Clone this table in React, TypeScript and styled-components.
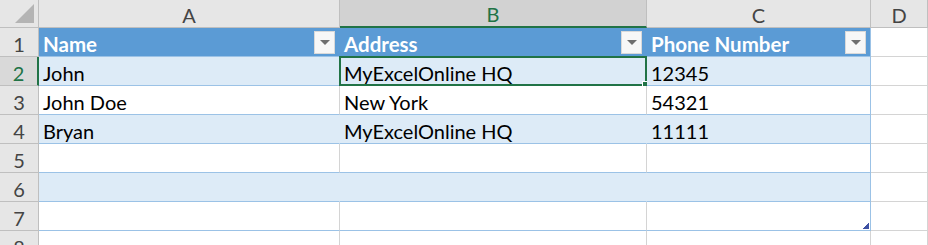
import React from 'react';
import styled, { createGlobalStyle, css } from 'styled-components';

const GlobalStyle = createGlobalStyle`
  html, body {
    margin: 0;
    padding: 0;
    background: #ffffff;
    overflow: hidden;
  }
  body {
    font-family: Lato, 'Open Sans', 'Liberation Sans', sans-serif;
  }
`;

const GRID = '#d4d4d4';
const HEAD_LINE = '#bfbfbf';
const GREEN = '#217346';
const BAND = '#ddebf7';
const BAND_LINE = '#9bc2e6';
const TABLE_HEAD = '#5b9bd5';

const Sheet = styled.div`
  display: grid;
  grid-template-columns: 39px 301px 307px 224px 1fr;
  grid-template-rows: 28px repeat(8, 29px);
  width: 928px;
  height: 245px;
  overflow: hidden;
`;

const Corner = styled.div`
  position: relative;
  background: #e6e6e6;
  border-right: 1px solid ${HEAD_LINE};
  border-bottom: 1px solid ${HEAD_LINE};
  box-sizing: border-box;

  &::after {
    content: '';
    position: absolute;
    right: 4px;
    bottom: 4px;
    width: 0;
    height: 0;
    border-left: 19px solid transparent;
    border-bottom: 19px solid #b4b4b4;
  }
`;

const ColHead = styled.div<{ $active?: boolean }>`
  display: flex;
  align-items: center;
  justify-content: center;
  box-sizing: border-box;
  font-size: 20px;
  color: #444444;
  background: #e6e6e6;
  border-right: 1px solid ${HEAD_LINE};
  border-bottom: 1px solid ${HEAD_LINE};
  padding-top: 2px;

  ${(p) =>
    p.$active &&
    css`
      background: #d2d2d2;
      color: ${GREEN};
      border-bottom: 2px solid ${GREEN};
    `}
`;

const RowHead = styled.div<{ $active?: boolean }>`
  display: flex;
  align-items: center;
  justify-content: center;
  box-sizing: border-box;
  font-size: 20px;
  color: #444444;
  background: #e6e6e6;
  border-right: 1px solid ${HEAD_LINE};
  border-bottom: 1px solid ${HEAD_LINE};
  padding-top: 3px;

  ${(p) =>
    p.$active &&
    css`
      background: #d9d9d9;
      color: ${GREEN};
      border-right: 2px solid ${GREEN};
    `}
`;

type Kind = 'plain' | 'head' | 'band' | 'white';

const Cell = styled.div<{ $kind: Kind; $edge?: boolean }>`
  position: relative;
  display: flex;
  align-items: center;
  box-sizing: border-box;
  padding: 3px 0 0 4px;
  font-size: 20px;
  color: #000000;
  white-space: nowrap;
  border-right: 1px solid ${GRID};
  border-bottom: 1px solid ${GRID};

  ${(p) =>
    p.$kind === 'head' &&
    css`
      background: ${TABLE_HEAD};
      color: #ffffff;
      font-weight: 700;
      font-size: 20.5px;
      border-right-color: ${TABLE_HEAD};
      border-bottom-color: ${BAND_LINE};
    `}

  ${(p) =>
    p.$kind === 'band' &&
    css`
      background: ${BAND};
      border-right-color: ${BAND};
      border-bottom-color: ${BAND_LINE};
    `}

  ${(p) =>
    p.$kind === 'white' &&
    css`
      background: #ffffff;
      border-bottom-color: ${BAND_LINE};
    `}

  ${(p) =>
    p.$edge &&
    css`
      border-right-color: ${BAND_LINE};
    `}
`;

const FilterButton = styled.span`
  position: absolute;
  right: 4px;
  top: 3px;
  width: 21px;
  height: 23px;
  box-sizing: border-box;
  background: #f7f7f7;
  border: 1px solid #d9d9d9;
  display: flex;
  align-items: center;
  justify-content: center;

  &::before {
    content: '';
    width: 0;
    height: 0;
    border-left: 5px solid transparent;
    border-right: 5px solid transparent;
    border-top: 5px solid #6e6e6e;
  }
`;

const Selection = styled.span`
  position: absolute;
  left: -1px;
  top: -1px;
  right: -1px;
  bottom: -1px;
  border: 2px solid ${GREEN};
  pointer-events: none;

  &::after {
    content: '';
    position: absolute;
    right: -5px;
    bottom: -5px;
    width: 6px;
    height: 6px;
    background: ${GREEN};
    border: 1px solid #ffffff;
  }
`;

const ResizeMark = styled.span`
  position: absolute;
  right: 1px;
  bottom: 1px;
  width: 6px;
  height: 6px;
  background: linear-gradient(135deg, transparent 45%, #3f51a3 45%);
`;

const columns = ['A', 'B', 'C', 'D'];
const headers = ['Name', 'Address', 'Phone Number'];
const rows: string[][] = [
  ['John', 'MyExcelOnline HQ', '12345'],
  ['John Doe', 'New York', '54321'],
  ['Bryan', 'MyExcelOnline HQ', '11111'],
  ['', '', ''],
  ['', '', ''],
  ['', '', ''],
];

const App: React.FC = () => {
  return (
    <>
      <GlobalStyle />
      <Sheet>
        <Corner />
        {columns.map((c) => (
          <ColHead key={c} $active={c === 'B'}>
            {c}
          </ColHead>
        ))}

        <RowHead>1</RowHead>
        {headers.map((h, i) => (
          <Cell key={h} $kind="head" $edge={i === 2}>
            {h}
            <FilterButton />
          </Cell>
        ))}
        <Cell $kind="plain" />

        {rows.map((r, ri) => {
          const rowNum = ri + 2;
          const kind: Kind = ri % 2 === 0 ? 'band' : 'white';
          return (
            <React.Fragment key={rowNum}>
              <RowHead $active={rowNum === 2}>{rowNum}</RowHead>
              {r.map((v, ci) => (
                <Cell key={ci} $kind={kind} $edge={ci === 2}>
                  {v}
                  {rowNum === 2 && ci === 1 && <Selection />}
                  {rowNum === 7 && ci === 2 && <ResizeMark />}
                </Cell>
              ))}
              <Cell $kind="plain" />
            </React.Fragment>
          );
        })}

        <RowHead>8</RowHead>
        <Cell $kind="plain" />
        <Cell $kind="plain" />
        <Cell $kind="plain" />
        <Cell $kind="plain" />
      </Sheet>
    </>
  );
};

export default App;
